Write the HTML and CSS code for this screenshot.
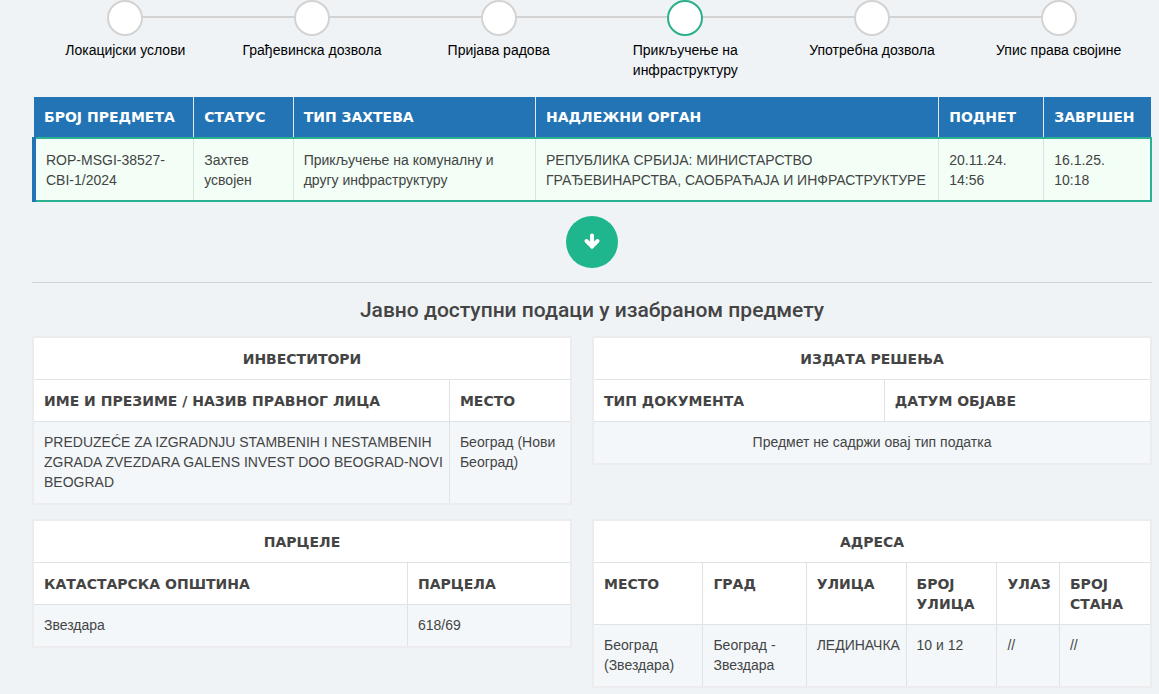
FILE: index.html
```
<!DOCTYPE html>
<html lang="sr">
<head>
<meta charset="utf-8">
<meta name="viewport" content="width=device-width, initial-scale=1">
<title>Јавно доступни подаци</title>
<link rel="stylesheet" href="styles.css">
</head>
<body>
<main class="page">
  <ol class="steps">
    <li class="step"><span class="step-dot"></span><span class="step-label">Локацијски услови</span></li>
    <li class="step"><span class="step-dot"></span><span class="step-label">Грађевинска дозвола</span></li>
    <li class="step"><span class="step-dot"></span><span class="step-label">Пријава радова</span></li>
    <li class="step step-active" aria-current="step"><span class="step-dot"></span><span class="step-label">Прикључење на инфраструктуру</span></li>
    <li class="step"><span class="step-dot"></span><span class="step-label">Употребна дозвола</span></li>
    <li class="step"><span class="step-dot"></span><span class="step-label">Упис права својине</span></li>
  </ol>

  <table class="cases">
    <colgroup>
      <col class="case-number"><col class="case-status"><col class="case-type"><col class="case-authority"><col class="case-filed"><col class="case-closed">
    </colgroup>
    <thead>
      <tr><th scope="col">БРОЈ ПРЕДМЕТА</th><th scope="col">СТАТУС</th><th scope="col">ТИП ЗАХТЕВА</th><th scope="col">НАДЛЕЖНИ ОРГАН</th><th scope="col">ПОДНЕТ</th><th scope="col">ЗАВРШЕН</th></tr>
    </thead>
    <tbody>
      <tr><td>ROP-MSGI-38527-CBI-1/2024</td><td>Захтев усвојен</td><td>Прикључење на комуналну и другу инфраструктуру</td><td>РЕПУБЛИКА СРБИЈА: МИНИСТАРСТВО ГРАЂЕВИНАРСТВА, САОБРАЋАЈА И ИНФРАСТРУКТУРЕ</td><td>20.11.24. 14:56</td><td>16.1.25. 10:18</td></tr>
    </tbody>
  </table>

  <button class="expand" type="button" aria-label="Прикажи податке">
    <svg class="expand-icon" viewBox="0 0 18 18" aria-hidden="true"><path d="M9 2.500v10M3.500 8l5.500 5.500L14.500 8"/></svg>
  </button>

  <section class="details">
    <h2 class="details-title">Јавно доступни подаци у изабраном предмету</h2>
    <div class="panels">
      <table class="panel">
        <colgroup><col class="investor-name"><col></colgroup>
        <thead>
          <tr><th class="panel-title" colspan="2">ИНВЕСТИТОРИ</th></tr>
          <tr><th scope="col">ИМЕ И ПРЕЗИМЕ / НАЗИВ ПРАВНОГ ЛИЦА</th><th scope="col">МЕСТО</th></tr>
        </thead>
        <tbody>
          <tr><td>PREDUZEĆE ZA IZGRADNJU STAMBENIH I NESTAMBENIH ZGRADA ZVEZDARA GALENS INVEST DOO BEOGRAD-NOVI BEOGRAD</td><td>Београд (Нови Београд)</td></tr>
        </tbody>
      </table>

      <table class="panel">
        <colgroup><col class="document-type"><col></colgroup>
        <thead>
          <tr><th class="panel-title" colspan="2">ИЗДАТА РЕШЕЊА</th></tr>
          <tr><th scope="col">ТИП ДОКУМЕНТА</th><th scope="col">ДАТУМ ОБЈАВЕ</th></tr>
        </thead>
        <tbody>
          <tr><td class="panel-empty" colspan="2">Предмет не садржи овај тип податка</td></tr>
        </tbody>
      </table>

      <table class="panel">
        <colgroup><col class="parcel-area"><col></colgroup>
        <thead>
          <tr><th class="panel-title" colspan="2">ПАРЦЕЛЕ</th></tr>
          <tr><th scope="col">КАТАСТАРСКА ОПШТИНА</th><th scope="col">ПАРЦЕЛА</th></tr>
        </thead>
        <tbody>
          <tr><td>Звездара</td><td>618/69</td></tr>
        </tbody>
      </table>

      <table class="panel">
        <colgroup><col class="address-place"><col class="address-city"><col class="address-street"><col class="address-number"><col class="address-entrance"><col></colgroup>
        <thead>
          <tr><th class="panel-title" colspan="6">АДРЕСА</th></tr>
          <tr><th scope="col">МЕСТО</th><th scope="col">ГРАД</th><th scope="col">УЛИЦА</th><th scope="col">БРОЈ УЛИЦА</th><th scope="col">УЛАЗ</th><th scope="col">БРОЈ СТАНА</th></tr>
        </thead>
        <tbody>
          <tr><td>Београд (Звездара)</td><td>Београд - Звездара</td><td>ЛЕДИНАЧКА</td><td>10 и 12</td><td>//</td><td>//</td></tr>
        </tbody>
      </table>
    </div>
  </section>
</main>
</body>
</html>
```
FILE: styles.css
```
* { box-sizing: border-box; }

body {
  margin: 0;
  background: #eff3f6;
  color: #444;
  font: 14px/20px "Liberation Sans", Arial, sans-serif;
}

.page {
  display: flex;
  flex-direction: column;
  padding: 0 7px 0 32px;
}

/* Progress steps */
.steps {
  display: grid;
  grid-template-columns: repeat(6, 1fr);
  margin: 0 0 17px;
  padding: 0;
  list-style: none;
}

.step {
  position: relative;
  display: flex;
  flex-direction: column;
  align-items: center;
  gap: 4px;
  color: #000;
  text-align: center;
}

.step + .step::before {
  content: "";
  position: absolute;
  top: 16px;
  right: 50%;
  width: 100%;
  height: 2px;
  background: #d3d3d3;
}

.step-dot {
  position: relative;
  z-index: 1;
  width: 36px;
  height: 36px;
  border: 2px solid #d3d3d3;
  border-radius: 50%;
  background: #fff;
}

.step-active .step-dot { border-color: #2bb08c; }

.step-label { padding: 0 20px; }

/* Tables */
table {
  width: 100%;
  border-collapse: collapse;
  table-layout: fixed;
}

th, td {
  padding: 10px;
  text-align: left;
  vertical-align: top;
}

th {
  font-family: "DejaVu Sans", sans-serif;
  font-weight: 700;
}

.cases th {
  border-left: 1px solid #e3e9ee;
  background: #2374b5;
  color: #fff;
}

.cases th:first-child { border-left: 0; }

.cases td {
  padding-top: 11px;
  border-left: 1px solid #dbe5df;
  background: #f2fef6;
}

.cases tbody tr {
  border: 2px solid #2bb094;
  border-left: 4px solid #2374b5;
}

.cases td:first-child { border-left: 4px solid #2374b5; }

.case-number { width: 14.3%; }
.case-status { width: 8.9%; }
.case-type { width: 21.7%; }
.case-authority { width: 36.1%; }
.case-filed { width: 9.4%; }
.case-closed { width: 9.6%; }

/* Expand button */
.expand {
  display: grid;
  place-items: center;
  align-self: center;
  width: 52px;
  height: 52px;
  margin: 14px 0;
  padding: 0;
  border: 0;
  border-radius: 50%;
  background: #20b68d;
  cursor: pointer;
}

.expand-icon {
  width: 18px;
  height: 18px;
  fill: none;
  stroke: #fff;
  stroke-width: 4;
  stroke-linecap: round;
}

/* Case details */
.details { border-top: 1px solid #ced3d7; }

.details-title {
  margin: 15px 0 14px;
  font: 500 21px/24px Roboto, sans-serif;
  text-align: center;
}

.panels {
  display: grid;
  grid-template-columns: calc(50% - 20px) 1fr;
  gap: 14px 20px;
  align-items: start;
}

.panel {
  border: 2px solid #ececee;
  background: #fff;
}

.panel th, .panel td { border: 1px solid #e0e3e6; }

.panel tr > :first-child { border-left: 2px solid #ececee; }
.panel tr > :last-child { border-right: 2px solid #ececee; }
.panel thead tr:first-child > * { border-top: 2px solid #ececee; }
.panel tbody tr:last-child > * { border-bottom: 2px solid #ececee; }

.panel th { padding: 11px 4px 10px 10px; }

.panel td {
  padding: 10px 4px 11px 10px;
  background: #f3f7fa;
}

.panel .panel-title, .panel .panel-empty {
  padding-right: 10px;
  text-align: center;
}

.investor-name { width: 77.4%; }
.document-type { width: 52.2%; }
.parcel-area { width: 69.6%; }
.address-place { width: 19.7%; }
.address-city { width: 18.5%; }
.address-street { width: 17.9%; }
.address-number { width: 16.3%; }
.address-entrance { width: 11.2%; }
```
